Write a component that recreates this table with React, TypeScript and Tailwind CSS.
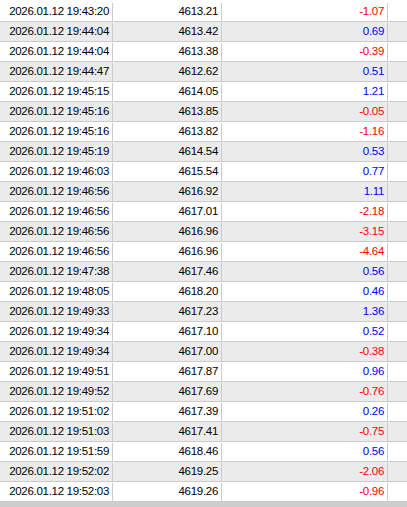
const ticks: [string, string, string][] = [
  ['2026.01.12 19:43:20', '4613.21', '-1.07'],
  ['2026.01.12 19:44:04', '4613.42', '0.69'],
  ['2026.01.12 19:44:04', '4613.38', '-0.39'],
  ['2026.01.12 19:44:47', '4612.62', '0.51'],
  ['2026.01.12 19:45:15', '4614.05', '1.21'],
  ['2026.01.12 19:45:16', '4613.85', '-0.05'],
  ['2026.01.12 19:45:16', '4613.82', '-1.16'],
  ['2026.01.12 19:45:19', '4614.54', '0.53'],
  ['2026.01.12 19:46:03', '4615.54', '0.77'],
  ['2026.01.12 19:46:56', '4616.92', '1.11'],
  ['2026.01.12 19:46:56', '4617.01', '-2.18'],
  ['2026.01.12 19:46:56', '4616.96', '-3.15'],
  ['2026.01.12 19:46:56', '4616.96', '-4.64'],
  ['2026.01.12 19:47:38', '4617.46', '0.56'],
  ['2026.01.12 19:48:05', '4618.20', '0.46'],
  ['2026.01.12 19:49:33', '4617.23', '1.36'],
  ['2026.01.12 19:49:34', '4617.10', '0.52'],
  ['2026.01.12 19:49:34', '4617.00', '-0.38'],
  ['2026.01.12 19:49:51', '4617.87', '0.96'],
  ['2026.01.12 19:49:52', '4617.69', '-0.76'],
  ['2026.01.12 19:51:02', '4617.39', '0.26'],
  ['2026.01.12 19:51:03', '4617.41', '-0.75'],
  ['2026.01.12 19:51:59', '4618.46', '0.56'],
  ['2026.01.12 19:52:02', '4619.25', '-2.06'],
  ['2026.01.12 19:52:03', '4619.26', '-0.96'],
]

export default function App() {
  return (
    <div className="w-[407px] h-[507px] bg-white overflow-hidden flex flex-col font-['Liberation_Sans',Arial,sans-serif] text-[11.5px] tracking-[-0.3px] text-black">
      <div className="flex-1 flex flex-col">
        {ticks.map(([time, price, delta], i) => (
          <div
            key={i}
            className={`flex border-b border-[#cbcbcb] ${i === 0 ? 'h-[22px] pt-[3px]' : 'h-[20px] pt-px'} ${i % 2 === 1 ? 'bg-[#ebebeb]' : 'bg-white'}`}
          >
            <div className="w-[113px] border-r border-[#cbcbcb] flex items-center justify-end pr-[3px]">{time}</div>
            <div className="w-[109px] border-r border-[#cbcbcb] flex items-center justify-end pr-[3px]">{price}</div>
            <div
              className={`w-[166px] border-r border-[#cbcbcb] flex items-center justify-end pr-[3px] ${delta.startsWith('-') ? 'text-[#ff0000]' : 'text-[#0000ff]'}`}
            >
              {delta}
            </div>
            <div className="flex-1" />
          </div>
        ))}
      </div>
      <div className="h-[5px] bg-[#cdcdcd]" />
    </div>
  )
}
